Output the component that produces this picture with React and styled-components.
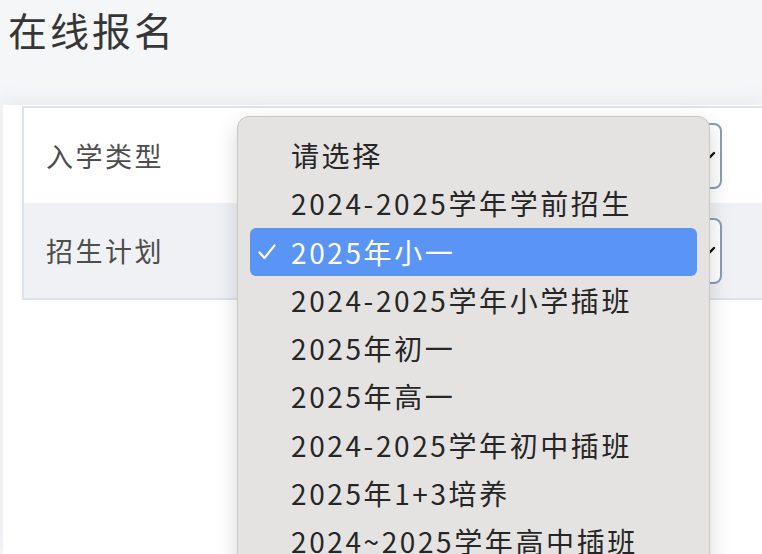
import React from "react";
import styled, { createGlobalStyle } from "styled-components";

const options = [
    "请选择",
    "2024-2025学年学前招生",
    "2025年小一",
    "2024-2025学年小学插班",
    "2025年初一",
    "2025年高一",
    "2024-2025学年初中插班",
    "2025年1+3培养",
    "2024~2025学年高中插班",
];

const fields = [
    { id: 1, label: "入学类型" },
    { id: 2, label: "招生计划" },
];

const App = () => {
    const selected = "2025年小一";

    return (
        <>
        <GlobalStyle />
        <Page>
            <Header>
                <Title>在线报名</Title>
            </Header>
            <Panel>
                <FormTable>
                    {fields.map((field, i) => (
                        <Row key={field.id} $alt={i % 2 === 1}>
                            <Label>{field.label}</Label>
                            <SelectBox>
                                <svg width="14" height="10" viewBox="0 0 14 10">
                                    <polyline points="2,2 7,7 12,2" fill="none" stroke="#111" strokeWidth="2.4" strokeLinecap="round" />
                                </svg>
                            </SelectBox>
                        </Row>
                    ))}
                </FormTable>
            </Panel>

            <Popup>
                {options.map(opt => (
                    <Option key={opt} $selected={opt === selected}>
                        <Check>
                            {opt === selected && (
                                <svg width="18" height="16" viewBox="0 0 18 16">
                                    <polyline points="1.5,8.5 6.5,14 16.5,1.5" fill="none" stroke="#fff" strokeWidth="2.2" strokeLinecap="round" strokeLinejoin="round" />
                                </svg>
                            )}
                        </Check>
                        {opt}
                    </Option>
                ))}
            </Popup>
        </Page>
        </>
    )
}

const GlobalStyle = createGlobalStyle`
    body{
        margin: 0;
        background: #f5f6f8;
        font-family: "Noto Sans CJK SC", "Noto Sans", sans-serif;
        overflow: hidden;
    }
`

const Page = styled.div`
    position: relative;
    height: 554px;
    display: flex;
    flex-direction: column;
`

const Header = styled.header`
    height: 105px;
    padding: 5px 0 0 8px;
    box-sizing: border-box;
`

const Title = styled.h1`
    margin: 0;
    font-size: 39px;
    line-height: 48px;
    font-weight: 400;
    letter-spacing: 3px;
    color: #363636;
`

const Panel = styled.section`
    flex: 1;
    margin-left: 3px;
    padding: 1px 0 0 19px;
    background: #fff;
    box-shadow: 0 -6px 14px rgba(200, 205, 212, 0.25);
`

const FormTable = styled.div`
    width: 800px;
    border: 2px solid #dce3ec;
`

const Row = styled.div`
    display: flex;
    align-items: center;
    height: 95px;
    background: ${({ $alt }) => ($alt ? "#eff1f5" : "#fff")};
`

const Label = styled.div`
    width: 216px;
    padding-left: 22px;
    box-sizing: border-box;
    font-size: 27px;
    letter-spacing: 2.5px;
    color: #4d4d4d;
`

const SelectBox = styled.div`
    width: 482px;
    height: 66px;
    box-sizing: border-box;
    border: 2px solid #8c9db2;
    border-radius: 8px;
    background: #fff;
    display: flex;
    align-items: center;
    justify-content: flex-end;
    padding-right: 4px;
`

const Popup = styled.div`
    position: absolute;
    left: 237px;
    top: 116px;
    bottom: -30px;
    width: 473px;
    box-sizing: border-box;
    padding: 14px 12px;
    background: #e4e3e2;
    border: 1px solid #c8c7c6;
    border-radius: 12px;
    box-shadow: 0 8px 22px rgba(0, 0, 0, 0.16);
`

const Option = styled.div`
    display: flex;
    align-items: center;
    height: 48.25px;
    padding-left: 8px;
    border-radius: 6px;
    font-size: 28px;
    letter-spacing: 2.6px;
    white-space: nowrap;
    color: ${({ $selected }) => ($selected ? "#fff" : "#262626")};
    background: ${({ $selected }) => ($selected ? "#5a95f5" : "transparent")};
`

const Check = styled.span`
    width: 33px;
    display: flex;
    align-items: center;
`

export default App;
